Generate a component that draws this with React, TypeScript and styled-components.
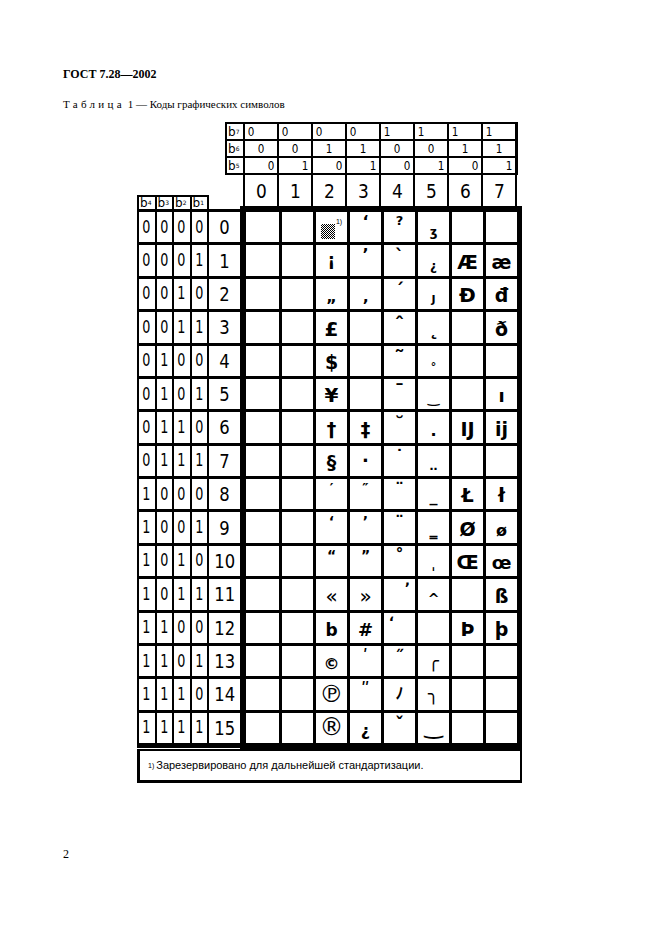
import React from 'react'
import styled, { createGlobalStyle, css } from 'styled-components'

type At = 'top' | 'mid' | 'bot'
type Align = 'left' | 'center' | 'right'

interface G {
  ch: string
  at?: At
  size?: number
  bold?: boolean
  dx?: number
}

const GlobalStyle = createGlobalStyle`
  html, body {
    margin: 0;
    padding: 0;
    background: #fff;
  }
  body {
    color: #000;
    font-family: 'Liberation Serif', 'Times New Roman', serif;
  }
`

const SANS = `'DejaVu Sans', 'Liberation Sans', sans-serif`

// glyphs for columns 2..7 of each row, columns 0 and 1 are empty
const ROWS: (G | 'reserved' | null)[][] = [
  ['reserved', { ch: 'ʻ', at: 'top', size: 16, bold: true }, { ch: '?', at: 'top', size: 13, bold: true }, { ch: 'ʒ', at: 'bot', size: 12, bold: true }, null, null],
  [{ ch: '¡', at: 'mid', size: 17, bold: true }, { ch: 'ʼ', at: 'top', size: 16, bold: true }, { ch: 'ˋ', at: 'top', size: 18, bold: true }, { ch: '¿', at: 'bot', size: 12, bold: true }, { ch: 'Æ', size: 19, bold: true }, { ch: 'æ', size: 19, bold: true }],
  [{ ch: '„', at: 'bot', size: 16, bold: true }, { ch: '‚', at: 'bot', size: 16, bold: true }, { ch: 'ˊ', at: 'top', size: 18, bold: true }, { ch: 'J', at: 'bot', size: 11, bold: true }, { ch: 'Đ', size: 20, bold: true }, { ch: 'đ', size: 19, bold: true }],
  [{ ch: '£', size: 20, bold: true }, null, { ch: 'ˆ', at: 'top', size: 20, bold: true }, { ch: '˛', at: 'bot', size: 22, bold: true }, null, { ch: 'ð', size: 19, bold: true }],
  [{ ch: '$', size: 19, bold: true }, null, { ch: '˜', at: 'top', size: 22, bold: true }, { ch: '°', at: 'bot', size: 11, bold: true }, null, null],
  [{ ch: '¥', size: 20, bold: true }, null, { ch: 'ˉ', at: 'top', size: 20, bold: true }, { ch: '‿', at: 'bot', size: 14, bold: true }, null, { ch: 'ı', size: 18, bold: true }],
  [{ ch: '†', size: 19, bold: true }, { ch: '‡', size: 19, bold: true }, { ch: '˘', at: 'top', size: 20, bold: true }, { ch: '.', at: 'bot', size: 16, bold: true }, { ch: 'Ĳ', size: 19, bold: true }, { ch: 'ĳ', size: 19, bold: true }],
  [{ ch: '§', size: 19, bold: true }, { ch: '·', at: 'mid', size: 18, bold: true }, { ch: '˙', at: 'top', size: 18, bold: true }, { ch: '‥', at: 'bot', size: 12, bold: true }, null, null],
  [{ ch: '′', at: 'top', size: 14, bold: true }, { ch: '″', at: 'top', size: 14, bold: true }, { ch: '¨', at: 'top', size: 18, bold: true }, { ch: '_', at: 'bot', size: 16, bold: true }, { ch: 'Ł', size: 19, bold: true }, { ch: 'ł', size: 19, bold: true }],
  [{ ch: '‘', at: 'top', size: 14, bold: true }, { ch: '’', at: 'top', size: 14, bold: true }, { ch: '¨', at: 'top', size: 18, bold: true }, { ch: '‗', at: 'bot', size: 16, bold: true }, { ch: 'Ø', size: 19, bold: true }, { ch: 'ø', size: 16, bold: true }],
  [{ ch: '“', at: 'top', size: 14, bold: true }, { ch: '”', at: 'top', size: 14, bold: true }, { ch: '˚', at: 'top', size: 18, bold: true }, { ch: 'ˌ', at: 'bot', size: 14, bold: true }, { ch: 'Œ', size: 19, bold: true }, { ch: 'œ', size: 18, bold: true }],
  [{ ch: '«', size: 20 }, { ch: '»', size: 20 }, { ch: 'ʼ', at: 'top', size: 14, bold: true, dx: 8 }, { ch: '^', at: 'bot', size: 14, bold: true }, null, { ch: 'ß', size: 19, bold: true }],
  [{ ch: 'b', size: 17, bold: true }, { ch: '#', size: 18, bold: true }, { ch: 'ʻ', at: 'top', size: 14, bold: true, dx: -8 }, null, { ch: 'Þ', size: 19, bold: true }, { ch: 'þ', size: 19, bold: true }],
  [{ ch: '©', size: 16, bold: true }, { ch: 'ʹ', at: 'top', size: 16, bold: true }, { ch: '˝', at: 'top', size: 18, bold: true }, { ch: '╭', at: 'mid', size: 18, bold: true }, null, null],
  [{ ch: '℗', size: 24 }, { ch: 'ʺ', at: 'top', size: 16, bold: true }, { ch: 'ﾉ', at: 'mid', size: 16, bold: true }, { ch: '╮', at: 'mid', size: 18, bold: true }, null, null],
  [{ ch: '®', size: 24 }, { ch: '¿', size: 16, bold: true }, { ch: 'ˇ', at: 'top', size: 18, bold: true }, { ch: '‿', at: 'bot', size: 22, bold: true }, null, null],
]

const HEADER_BITS: { label: number; shift: number; align: Align }[] = [
  { label: 7, shift: 2, align: 'left' },
  { label: 6, shift: 1, align: 'center' },
  { label: 5, shift: 0, align: 'right' },
]

const COLS = [0, 1, 2, 3, 4, 5, 6, 7]
const ROW_IDX = Array.from({ length: 16 }, (_, i) => i)

const Page = styled.div`
  width: 661px;
  height: 936px;
  box-sizing: border-box;
  padding: 66px 0 0 63px;
`

const Title = styled.h1`
  margin: 0;
  font: bold 12px/16px 'Liberation Serif', 'Times New Roman', serif;
`

const Caption = styled.p`
  margin: 15px 0 0;
  font: 11px/14px 'Liberation Serif', 'Times New Roman', serif;
`

const Spaced = styled.span`
  letter-spacing: 3.3px;
`

const TableArea = styled.div`
  margin: 11px 0 0 74px;
  width: 385px;
`

const BitHeader = styled.div`
  display: grid;
  grid-template-columns: 16px repeat(8, 32px);
  grid-auto-rows: 15px;
  gap: 2px;
  width: fit-content;
  margin-left: 88px;
  padding: 2px 3px 2px 2px;
  background: #000;
`

const Label = styled.div`
  display: flex;
  align-items: center;
  padding-left: 1px;
  background: #fff;
  font: 12px/1 ${SANS};
`

const Sub = styled.sub`
  font-size: 6px;
  vertical-align: -1px;
`

const BitCell = styled.div<{ $align: Align }>`
  display: flex;
  align-items: center;
  justify-content: ${({ $align }) =>
    $align === 'left' ? 'flex-start' : $align === 'right' ? 'flex-end' : 'center'};
  padding: 0 2px;
  background: #fff;
  font: 13px/1 ${SANS};
`

const Narrow = styled.span<{ $sx?: number }>`
  display: inline-block;
  transform: scaleX(${({ $sx }) => $sx ?? 0.8});
`

const Body = styled.div`
  display: flex;
  align-items: flex-start;
`

const LeftCol = styled.div`
  margin-top: 20px;
  width: 103px;
`

const LeftHead = styled.div`
  display: grid;
  grid-template-columns: repeat(4, 15.5px);
  grid-template-rows: 12px;
  gap: 2px;
  width: fit-content;
  padding: 2px 2px 0 2px;
  background: #000;
`

const LeftRows = styled.div`
  display: grid;
  grid-template-columns: repeat(4, 15.5px) 1fr;
  grid-template-rows: repeat(16, 30.375px);
  gap: 3px 2px;
  padding: 3px 0 5px 2px;
  background: #000;
`

const BitBox = styled.div`
  display: flex;
  align-items: center;
  justify-content: center;
  background: #fff;
  font: 17px/1 ${SANS};
`

const RowNum = styled.div`
  display: flex;
  align-items: center;
  justify-content: center;
  background: #fff;
  font: 20px/1 ${SANS};
`

const MainCol = styled.div`
  display: flex;
  flex-direction: column;
`

const NumberRow = styled.div`
  display: grid;
  grid-template-columns: repeat(8, 32px);
  gap: 2px;
  height: 31px;
  width: fit-content;
  margin-left: 3px;
  padding: 0 2px;
  background: #000;
`

const ColNum = styled.div`
  display: flex;
  align-items: center;
  justify-content: center;
  background: #fff;
  font: 20px/1 ${SANS};
`

const Grid = styled.div`
  display: grid;
  grid-template-columns: 33px repeat(7, 31px);
  grid-template-rows: repeat(16, 1fr);
  gap: 3px;
  width: 271px;
  height: 531px;
  border: solid #000;
  border-width: 6px 5px 6px 6px;
  background: #000;
`

const Cell = styled.div<{ $at: At; $dx: number }>`
  display: flex;
  justify-content: center;
  overflow: hidden;
  background: #fff;
  padding-left: ${({ $dx }) => Math.max($dx, 0) * 2}px;
  padding-right: ${({ $dx }) => Math.max(-$dx, 0) * 2}px;
  ${({ $at }) =>
    $at === 'top'
      ? css`
          align-items: flex-start;
          padding-top: 2px;
        `
      : $at === 'mid'
        ? css`
            align-items: center;
          `
        : css`
            align-items: flex-end;
            padding-bottom: 4px;
          `}
`

const Glyph = styled.span<{ $size: number; $bold: boolean }>`
  font-family: ${SANS}, 'Noto Sans CJK JP';
  font-size: ${({ $size }) => $size}px;
  font-weight: ${({ $bold }) => ($bold ? 700 : 400)};
  line-height: 1;
`

const Reserved = styled.div`
  display: flex;
  align-items: flex-start;
  gap: 1px;
  padding-top: 4px;
`

const Shade = styled.div`
  width: 14px;
  height: 15px;
  margin-top: 6px;
  background: repeating-conic-gradient(#000 0 25%, #fff 0 50%) 0 0 / 2px 2px;
`

const Note = styled.span`
  font: 7px/1 'Liberation Sans', Arial, sans-serif;
`

const Footnote = styled.div`
  display: flex;
  align-items: center;
  box-sizing: border-box;
  height: 34px;
  padding: 0 0 0 8px;
  border: solid #000;
  border-width: 2px 2px 3px 3px;
  font: 11px/1 'Liberation Sans', Arial, sans-serif;
`

const FootMark = styled.sup`
  font-size: 7px;
  margin-right: 2px;
  vertical-align: 5px;
`

const PageNumber = styled.div`
  margin-top: 64px;
  font: 12px/14px 'Liberation Serif', 'Times New Roman', serif;
`

const renderCell = (g: G | 'reserved' | null, key: string) => {
  if (g === 'reserved') {
    return (
      <Cell key={key} $at="top" $dx={0}>
        <Reserved>
          <Shade />
          <Note>1)</Note>
        </Reserved>
      </Cell>
    )
  }
  if (!g) return <Cell key={key} $at="mid" $dx={0} />
  return (
    <Cell key={key} $at={g.at ?? 'bot'} $dx={g.dx ?? 0}>
      <Glyph $size={g.size ?? 16} $bold={!!g.bold}>
        {g.ch}
      </Glyph>
    </Cell>
  )
}

const App = () => {
  return (
    <Page>
      <GlobalStyle />
      <Title>ГОСТ 7.28—2002</Title>
      <Caption>
        <Spaced>Таблица</Spaced> 1 — Коды графических символов
      </Caption>

      <TableArea>
        <BitHeader>
          {HEADER_BITS.map((row) => (
            <React.Fragment key={row.label}>
              <Label>
                b<Sub>{row.label}</Sub>
              </Label>
              {COLS.map((c) => (
                <BitCell key={c} $align={row.align}>
                  <Narrow>{(c >> row.shift) & 1}</Narrow>
                </BitCell>
              ))}
            </React.Fragment>
          ))}
        </BitHeader>

        <Body>
          <LeftCol>
            <LeftHead>
              {[4, 3, 2, 1].map((b) => (
                <Label key={b}>
                  b<Sub>{b}</Sub>
                </Label>
              ))}
            </LeftHead>
            <LeftRows>
              {ROW_IDX.map((r) => (
                <React.Fragment key={r}>
                  {[3, 2, 1, 0].map((s) => (
                    <BitBox key={s}>
                      <Narrow $sx={0.75}>{(r >> s) & 1}</Narrow>
                    </BitBox>
                  ))}
                  <RowNum>
                    <Narrow $sx={0.82}>{r}</Narrow>
                  </RowNum>
                </React.Fragment>
              ))}
            </LeftRows>
          </LeftCol>

          <MainCol>
            <NumberRow>
              {COLS.map((c) => (
                <ColNum key={c}>
                  <Narrow $sx={0.85}>{c}</Narrow>
                </ColNum>
              ))}
            </NumberRow>
            <Grid>
              {ROWS.map((row, r) => (
                <React.Fragment key={r}>
                  {renderCell(null, `${r}-0`)}
                  {renderCell(null, `${r}-1`)}
                  {row.map((g, i) => renderCell(g, `${r}-${i + 2}`))}
                </React.Fragment>
              ))}
            </Grid>
          </MainCol>
        </Body>

        <Footnote>
          <FootMark>1)</FootMark>
          Зарезервировано для дальнейшей стандартизации.
        </Footnote>
      </TableArea>

      <PageNumber>2</PageNumber>
    </Page>
  )
}

export default App
